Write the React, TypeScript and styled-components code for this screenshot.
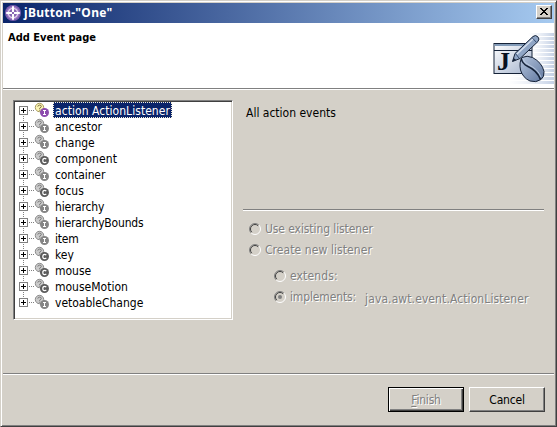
import React from 'react';
import styled, { createGlobalStyle, css } from 'styled-components';

const FACE = '#d4d0c8';
const SHADOW = '#808080';
const DARK = '#404040';

const GlobalStyle = createGlobalStyle`
  body {
    margin: 0;
    background: ${FACE};
    font: 12px/16px 'DejaVu Sans Condensed', 'DejaVu Sans', sans-serif;
    font-stretch: condensed;
    color: #000;
  }
  svg { display: block; flex: none; }
`;

const Dialog = styled.div`
  box-sizing: border-box;
  width: 557px;
  height: 427px;
  display: flex;
  flex-direction: column;
  background: ${FACE};
  border-style: solid;
  border-width: 1px;
  border-color: ${FACE} ${DARK} ${DARK} ${FACE};
  box-shadow: inset 1px 1px #fff, inset -1px -1px ${SHADOW};
  padding: 2px;
`;

const TitleBar = styled.div`
  height: 20px;
  display: flex;
  align-items: flex-start;
  box-sizing: border-box;
  padding: 2px 2px 0;
  background: linear-gradient(to right, #0a246a, #a6caf0);
`;

const Title = styled.span`
  flex: 1;
  margin-left: 3px;
  color: #fff;
  font: bold 12px/15px 'Noto Sans', sans-serif;
  letter-spacing: 0.3px;
`;

const CloseButton = styled.button`
  width: 16px;
  height: 14px;
  box-sizing: border-box;
  display: flex;
  align-items: flex-start;
  justify-content: flex-start;
  padding: 2px 0 0 3px;
  border: 1px solid;
  border-color: #fff ${DARK} ${DARK} #fff;
  box-shadow: inset -1px -1px ${SHADOW};
  background: ${FACE};
`;

const Banner = styled.div`
  height: 65px;
  display: flex;
  justify-content: space-between;
  background: #fff;
`;

const Heading = styled.h1`
  margin: 7px 0 0 5px;
  font: bold 11px/16px 'DejaVu Sans Condensed', sans-serif;
  font-stretch: condensed;
`;

const Rule = styled.div`
  height: 1px;
  flex: none;
  background: ${SHADOW};
  border-bottom: 1px solid #fff;
`;

const Body = styled.div`
  flex: 1;
  min-height: 0;
  display: flex;
  gap: 10px;
  padding: 10px 10px 0;
`;

const Tree = styled.ul`
  box-sizing: border-box;
  width: 220px;
  height: 220px;
  margin: 0;
  padding: 0;
  list-style: none;
  background: #fff;
  border: 1px solid;
  border-color: ${SHADOW} #fff #fff ${SHADOW};
  box-shadow: inset 1px 1px ${DARK}, inset -1px -1px ${FACE};
  padding: 1px;
`;

const TreeRow = styled.li`
  height: 16px;
  display: flex;
  align-items: center;
  padding-left: 4px;
`;

const Spaced = styled.span<{ $track?: number }>`
  letter-spacing: ${(p) => p.$track ?? 0}px;
  white-space: pre;
`;

const NodeLabel = styled(Spaced)<{ $selected?: boolean }>`
  height: 16px;
  box-sizing: border-box;
  margin-left: 3px;
  padding: 0 2px;
  line-height: 18px;
  ${(p) =>
    p.$selected &&
    css`
      color: #fff;
      background: #0a246a;
      outline: 1px dotted #f5f0d8;
      outline-offset: -1px;
    `}
`;

const Details = styled.div`
  width: 301px;
  display: flex;
  flex-direction: column;
`;

const Description = styled.div`
  height: 109px;
  flex: none;
  box-sizing: border-box;
  padding: 5px 0 0 3px;
`;

const Options = styled.div`
  display: flex;
  flex-direction: column;
  padding: 7px 0 0 6px;
`;

const SubOptions = styled.div`
  display: flex;
  flex-direction: column;
  padding: 5px 0 0 25px;
`;

const Option = styled.label`
  height: 21px;
  display: flex;
  align-items: center;
  color: ${SHADOW};
  text-shadow: 1px 1px #fff;
`;

const OptionText = styled(Spaced)`
  margin-left: 4px;
`;

const TypeName = styled(Spaced)`
  margin: 4px 0 0 9px;
`;

const Footer = styled.div`
  box-sizing: border-box;
  height: 49px;
  flex: none;
  display: flex;
  align-items: flex-start;
  justify-content: flex-end;
  gap: 5px;
  padding: 12px 9px 0 0;
`;

const PushButton = styled.button<{ $default?: boolean }>`
  width: 76px;
  height: 25px;
  box-sizing: border-box;
  padding: 0;
  font: inherit;
  font-stretch: condensed;
  letter-spacing: -0.2px;
  color: #000;
  background: ${FACE};
  border: 1px solid;
  border-color: #fff ${DARK} ${DARK} #fff;
  box-shadow: inset -1px -1px ${SHADOW};
  ${(p) =>
    p.$default &&
    css`
      border-color: #000;
      box-shadow: inset 1px 1px #fff, inset -1px -1px ${DARK}, inset -2px -2px ${SHADOW};
      color: ${SHADOW};
      text-shadow: 1px 1px #fff;
    `}
`;

const Mnemonic = styled.span`
  text-decoration: underline;
  text-underline-offset: 2px;
`;

const AppIcon = () => (
  <svg width="16" height="16" viewBox="0 0 16 16">
    <circle cx="8" cy="8" r="8" fill="#7d5fb0" />
    <circle cx="8" cy="8" r="6.5" fill="#a37fc8" />
    <circle cx="8" cy="8" r="4.6" fill="#8a68b4" stroke="#e6d8ee" strokeWidth="1.3" />
    <path d="M8 1.2v13.6M1.2 8h13.6" stroke="#fff" strokeWidth="2" />
    <rect x="7" y="7" width="2" height="2" fill="#8a68b4" />
  </svg>
);

const BannerArt = () => (
  <svg width="70" height="65" viewBox="484 23 70 65">
    <defs>
      <linearGradient id="fade" x1="0" x2="1">
        <stop offset="0" stopColor="#dfe6f2" stopOpacity="0" />
        <stop offset="1" stopColor="#c4d0e4" />
      </linearGradient>
      <linearGradient id="paper" x1="0" y1="0" x2="1" y2="1">
        <stop offset="0" stopColor="#ffffff" />
        <stop offset="1" stopColor="#a5b4ce" />
      </linearGradient>
      <linearGradient id="bean" x1="0" y1="0" x2="1" y2="1">
        <stop offset="0" stopColor="#b4c4dc" />
        <stop offset="1" stopColor="#60779f" />
      </linearGradient>
    </defs>
    {[33, 37, 41, 45, 49, 53, 57, 61, 65, 69, 73, 77, 81].map((y, i) => (
      <rect key={y} x={i > 9 ? 508 : 528} y={y} width={i > 9 ? 46 : 26} height="3" fill="url(#fade)" />
    ))}
    <rect x="494" y="43.5" width="38" height="30" fill="url(#paper)" stroke="#152238" />
    <rect x="494.5" y="44" width="37" height="2" fill="#829bb8" />
    <path d="M494 50.5h38" stroke="#152238" />
    <text x="497" y="69.500" fontFamily="Liberation Serif" fontWeight="bold" fontSize="26" fill="#07101f">J</text>
    <path d="M512.5 61.5l2.500-8 18-17q2.500-2 4.800.2 2.200 2.300.2 4.800l-18 17z" fill="#8fa5c5" stroke="#152238" />
    <path d="M516.500 54.500l17-16" stroke="#d8e1ef" strokeWidth="1.300" />
    <path d="M532 37.500l4.500 5M515.500 53.500l3.500 4.500" stroke="#354c70" />
    <path d="M512.500 61.500l1.200-3.500 2.500 2z" fill="#152238" />
    <path d="M522 57.500q5-2.500 10.500 0 9.500 5 11.500 14 .5 5.500-3 8-5 3.500-11 1.500-7-3-9.500-11-1.500-8 1.500-12.500z" fill="url(#bean)" stroke="#152238" />
    <path d="M521.500 59q.5 4.500 6.500 7.500 9 4 12.500 13" fill="none" stroke="#152238" strokeWidth="1.600" />
    <path d="M523 59q1.500 4 6 6 9 4 12 12" fill="none" stroke="#c4d2e6" strokeWidth="0.800" />
  </svg>
);

const CloseGlyph = () => (
  <svg width="8" height="7" viewBox="0 0 8 7" shapeRendering="crispEdges">
    <path d="M0 0h2v1h1v1h2v-1h1v-1h2v1h-1v1h-1v1h-1v1h1v1h1v1h1v1h-2v-1h-1v-1h-2v1h-1v1h-2v-1h1v-1h1v-1h1v-1h-1v-1h-1v-1h-1z" />
  </svg>
);

const Expander = ({ first, last }: { first: boolean; last: boolean }) => (
  <svg width="15" height="16" viewBox="0 0 15 16" shapeRendering="crispEdges">
    {!first && <path d="M4.500 0v4" stroke="#808080" strokeDasharray="1 1" />}
    {!last && <path d="M4.500 14v2" stroke="#808080" strokeDasharray="1 1" />}
    <path d="M10 8.500h5" stroke="#808080" strokeDasharray="1 1" />
    <rect x="0.500" y="4.500" width="8" height="8" fill="#fff" stroke="#808080" />
    <path d="M2 8.500h5M4.500 6v5" stroke="#000" />
  </svg>
);

type Kind = 'I' | 'C';

const NodeIcon = ({ kind, active }: { kind: Kind; active?: boolean }) => (
  <svg width="16" height="16" viewBox="0 0 16 16">
    <circle cx="5.500" cy="5.500" r="4.200" fill={active ? '#fbf5b4' : '#cbcbcb'} stroke={active ? '#a79a62' : '#8c8c8c'} />
    <path d="M3.800 4.600q.2-1.500 1.800-1.500t1.700 1.300q0 .8-1.600 1.700v.8M5.700 7.700v1" fill="none" stroke={active ? '#77683d' : '#777'} />
    <circle cx="10.500" cy="10.500" r="4.500" fill={active ? '#8c4bae' : kind === 'C' ? '#5c5c5c' : '#858585'} />
    {kind === 'I' ? (
      <path d="M9 8.500h3M10.500 8.500v4M9 12.500h3" stroke="#fff" fill="none" />
    ) : (
      <path d="M12.300 9.200q-.7-.8-1.800-.8-1.700 0-1.700 2.100t1.700 2.100q1.100 0 1.800-.8" stroke="#fff" strokeWidth="1.200" fill="none" />
    )}
  </svg>
);

const Radio = ({ checked }: { checked?: boolean }) => (
  <svg width="12" height="12" viewBox="0 0 12 12">
    <circle cx="6" cy="6" r="5" fill={FACE} />
    <path d="M2.100 9.900A5.500 5.500 0 0 1 9.900 2.100" fill="none" stroke="#808080" />
    <path d="M9.900 2.100A5.500 5.500 0 0 1 2.100 9.900" fill="none" stroke="#fff" />
    <path d="M2.800 9.200A4.500 4.500 0 0 1 9.200 2.800" fill="none" stroke="#404040" />
    {checked && <circle cx="6" cy="6" r="2" fill="#808080" />}
  </svg>
);

const nodes: { name: string; kind: Kind; track?: number }[] = [
  { name: 'action ActionListener', kind: 'I', track: 0.05 },
  { name: 'ancestor', kind: 'I' },
  { name: 'change', kind: 'I' },
  { name: 'component', kind: 'C', track: 0.1 },
  { name: 'container', kind: 'I', track: -0.1 },
  { name: 'focus', kind: 'C' },
  { name: 'hierarchy', kind: 'I', track: -0.2 },
  { name: 'hierarchyBounds', kind: 'I', track: -0.17 },
  { name: 'item', kind: 'I', track: -0.2 },
  { name: 'key', kind: 'C' },
  { name: 'mouse', kind: 'C' },
  { name: 'mouseMotion', kind: 'C' },
  { name: 'vetoableChange', kind: 'I' },
];

export default function App() {
  return (
    <Dialog>
      <GlobalStyle />
      <TitleBar>
        <AppIcon />
        <Title>jButton-"One"</Title>
        <CloseButton aria-label="Close">
          <CloseGlyph />
        </CloseButton>
      </TitleBar>
      <Banner>
        <Heading>Add Event page</Heading>
        <BannerArt />
      </Banner>
      <Rule />
      <Body>
        <Tree>
          {nodes.map((node, i) => (
            <TreeRow key={node.name}>
              <Expander first={i === 0} last={i === nodes.length - 1} />
              <NodeIcon kind={node.kind} active={i === 0} />
              <NodeLabel $track={node.track} $selected={i === 0}>
                {node.name}
              </NodeLabel>
            </TreeRow>
          ))}
        </Tree>
        <Details>
          <Description>
            <Spaced>All action events</Spaced>
          </Description>
          <Rule />
          <Options>
            <Option>
              <Radio />
              <OptionText $track={-0.09}>Use existing listener</OptionText>
            </Option>
            <Option>
              <Radio />
              <OptionText $track={0.08}>Create new listener</OptionText>
            </Option>
            <SubOptions>
              <Option>
                <Radio />
                <OptionText $track={0.15}>extends:</OptionText>
              </Option>
              <Option>
                <Radio checked />
                <OptionText $track={-0.13}>implements:</OptionText>
                <TypeName $track={0.1}>java.awt.event.ActionListener</TypeName>
              </Option>
            </SubOptions>
          </Options>
        </Details>
      </Body>
      <Rule />
      <Footer>
        <PushButton $default disabled>
          <Mnemonic>F</Mnemonic>inish
        </PushButton>
        <PushButton>Cancel</PushButton>
      </Footer>
    </Dialog>
  );
}
